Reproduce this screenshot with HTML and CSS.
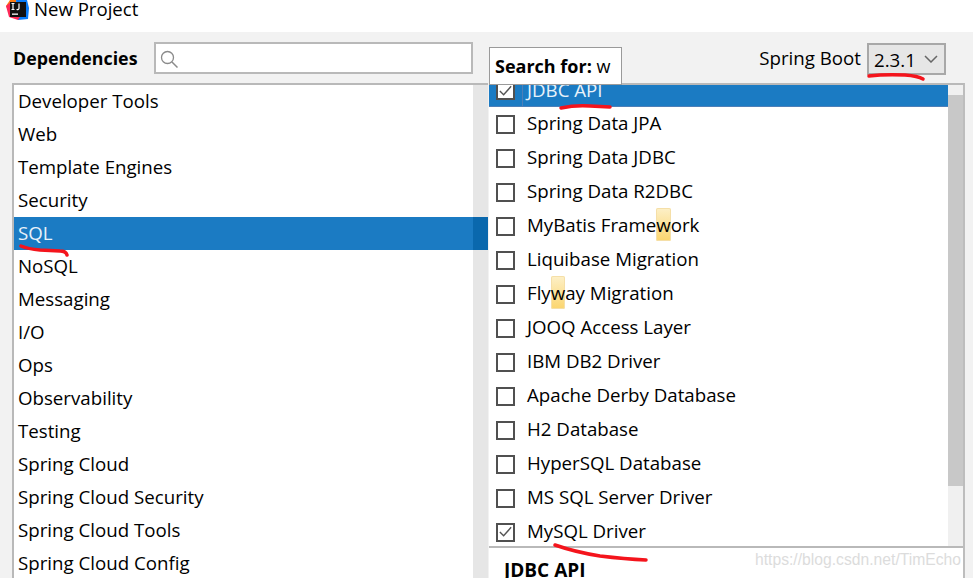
FILE: index.html
```html
<!DOCTYPE html>
<html lang="en">
<head>
<meta charset="utf-8">
<title>New Project</title>
<link rel="stylesheet" href="styles.css">
</head>
<body>
<div class="window">
  <header class="titlebar">
    <svg class="logo" width="23" height="21" viewBox="0 0 23 21">
      <path d="M0 6 L4 0 H10 V8 L4 14 Z" fill="#f97a12"/>
      <path d="M10 0 H21 L23 8 L22 19 L12 20 Z" fill="#087cfa"/>
      <path d="M0 6 L3 17 L12 20 L16 14 L5 2 Z" fill="#fe2857"/>
      <rect x="4" y="2" width="16" height="15" fill="#111"/>
      <rect x="6" y="13.5" width="6" height="1.3" fill="#fff"/>
      <path d="M7 3.5 V9.5 M5.5 3.5 H8.5 M5.5 9.5 H8.5 M13 3.5 V8.5 Q13 9.7 10.5 9.5" fill="none" stroke="#fff" stroke-width="1.2"/>
    </svg>
    <span class="title">New Project</span>
  </header>
  <main class="content">
    <div class="col-left">
      <div class="deps-head">
        <strong class="deps-label">Dependencies</strong>
        <div class="search">
          <svg width="18" height="18" viewBox="0 0 18 18"><circle cx="7.5" cy="7.5" r="6" fill="none" stroke="#8a8a8a" stroke-width="1.3"/><path d="M12 12 L17.5 17.5" stroke="#8a8a8a" stroke-width="1.5"/></svg>
        </div>
      </div>
      <div class="panel panel-left">
        <ul class="cats">
          <li>Developer Tools</li>
          <li>Web</li>
          <li>Template Engines</li>
          <li>Security</li>
          <li class="sel">SQL</li>
          <li>NoSQL</li>
          <li>Messaging</li>
          <li>I/O</li>
          <li>Ops</li>
          <li>Observability</li>
          <li>Testing</li>
          <li>Spring Cloud</li>
          <li>Spring Cloud Security</li>
          <li>Spring Cloud Tools</li>
          <li>Spring Cloud Config</li>
        </ul>
        <div class="track-left"><div class="track-sel"></div></div>
      </div>
    </div>
    <div class="col-right">
      <div class="boot-row">
        <span class="boot-label">Spring Boot</span>
        <div class="combo"><span>2.3.1</span>
          <svg width="14" height="8" viewBox="0 0 14 8"><path d="M1 1 L7 7 L13 1" fill="none" stroke="#666" stroke-width="1.5"/></svg>
        </div>
      </div>
      <div class="panel panel-right">
        <div class="list-wrap">
          <ul class="deps">
            <li class="dep first sel"><span class="box on"><svg width="16" height="14" viewBox="0 0 16 14"><path d="M2 7 L6 11 L14 2" fill="none" stroke="#555" stroke-width="1.5"/></svg></span><span class="dep-name">JDBC API</span></li>
            <li class="dep"><span class="box"></span>Spring Data JPA</li>
            <li class="dep"><span class="box"></span>Spring Data JDBC</li>
            <li class="dep"><span class="box"></span>Spring Data R2DBC</li>
            <li class="dep"><span class="box"></span><span>MyBatis Frame<mark>w</mark>ork</span></li>
            <li class="dep"><span class="box"></span>Liquibase Migration</li>
            <li class="dep"><span class="box"></span><span>Fly<mark>w</mark>ay Migration</span></li>
            <li class="dep"><span class="box"></span>JOOQ Access Layer</li>
            <li class="dep"><span class="box"></span>IBM DB2 Driver</li>
            <li class="dep"><span class="box"></span>Apache Derby Database</li>
            <li class="dep"><span class="box"></span>H2 Database</li>
            <li class="dep"><span class="box"></span>HyperSQL Database</li>
            <li class="dep"><span class="box"></span>MS SQL Server Driver</li>
            <li class="dep"><span class="box"><svg width="16" height="14" viewBox="0 0 16 14"><path d="M2 7 L6 11 L14 2" fill="none" stroke="#555" stroke-width="1.5"/></svg></span>MySQL Driver</li>
          </ul>
          <div class="track-right"><div class="thumb"></div></div>
        </div>
        <div class="desc"><strong>JDBC API</strong></div>
      </div>
    </div>
  </main>
  <div class="popup"><strong>Search for:</strong> w</div>
  <div class="watermark">https://blog.csdn.net/TimEcho</div>
  <svg class="ink" width="973" height="578" viewBox="0 0 973 578">
    <g fill="none" stroke="#f4141c" stroke-width="3.5" stroke-linecap="round" stroke-linejoin="round">
      <path d="M21 246 Q28 249 40 250 L60 251 Q66 251 67 255"/>
      <path d="M561 108 Q575 105 590 106 L610 107"/>
      <path d="M869 76 Q885 74 905 75 Q918 76 923 79"/>
      <path d="M555 545 Q575 552 600 556 Q625 559 646 560"/>
    </g>
  </svg>
</div>
</body>
</html>
```
FILE: styles.css
```css
* { box-sizing: border-box; }
html, body { margin: 0; padding: 0; }
body {
  width: 973px;
  height: 578px;
  overflow: hidden;
  font-family: "Open Sans", "Noto Sans", sans-serif;
  font-size: 18.7px;
  color: #000;
  background: #f2f2f2;
}
ul { list-style: none; margin: 0; padding: 0; }
.window { position: relative; width: 973px; height: 578px; overflow: hidden; }

.titlebar {
  height: 32px;
  background: #fff;
  display: flex;
  align-items: flex-start;
  padding-left: 6px;
  gap: 5px;
}
.logo { display: block; flex: none; }
.title { font-size: 18.6px; line-height: 18px; }

.content { display: flex; padding-left: 12px; height: 546px; }
.col-left { width: 477px; flex: none; display: flex; flex-direction: column; }
.col-right { width: 476px; flex: none; display: flex; flex-direction: column; }

.deps-head { height: 51px; flex: none; display: flex; align-items: flex-start; padding: 10px 0 0 1px; }
.deps-label { font-size: 17.8px; line-height: 32px; font-weight: 700; width: 141px; }
.search {
  width: 319px;
  height: 32px;
  border: 2px solid #b9b9b9;
  background: #fff;
  padding: 6px 0 0 4px;
}
.search svg { display: block; }

.panel-left {
  display: flex;
  flex: 1;
  min-height: 0;
  width: 476px;
  border-top: 2px solid #b9b9b9;
  border-left: 2px solid #b9b9b9;
  background: #fff;
}
.cats { width: 459px; }
.cats li { height: 33px; line-height: 32px; padding-left: 4px; white-space: nowrap; }
.cats li.sel { background: #1b7bc3; color: #e8f2fa; }
.track-left { width: 15px; background: #e6e6e6; padding-top: 132px; }
.track-sel { height: 33px; background: #0a68ad; }

.boot-row {
  height: 51px;
  flex: none;
  display: flex;
  align-items: flex-start;
  justify-content: flex-end;
  padding: 10px 19px 0 0;
  gap: 6px;
}
.boot-label { line-height: 32px; }
.combo {
  width: 79px;
  height: 32px;
  margin-top: 1px;
  border: 2px solid #a8a8a8;
  background: #e6e6e6;
  display: flex;
  align-items: center;
  gap: 8px;
  padding-left: 5px;
}
.panel-right {
  border-top: 2px solid #b9b9b9;
  border-right: 2px solid #bdbdbd;
  flex: 1;
  min-height: 0;
  display: flex;
  flex-direction: column;
}
.list-wrap { display: flex; height: 461px; flex: none; overflow: hidden; }
.deps { width: 459px; background: #fff; }
.dep { height: 34px; line-height: 32px; padding-bottom: 2px; display: flex; align-items: center; white-space: nowrap; }
.dep.first { height: 22px; line-height: 10px; padding-bottom: 0; align-items: flex-end; }
.dep.sel { background: #1b7bc3; color: #e8f2fa; border-bottom: 1px solid #4d7fb8; }
.dep-name { border-left: 1px solid #4d7fb8; padding-left: 4px; height: 22px; line-height: 11px; margin-left: -5px; }
.box {
  width: 19px;
  height: 19px;
  flex: none;
  margin: 2px 12px 0 7px;
  border: 2px solid #505050;
  background: #fff;
  display: flex;
  align-items: center;
  justify-content: center;
}
.first .box { margin-top: 0; margin-bottom: 6px; }
mark {
  background: linear-gradient(#fdf0c8, #fbd56e);
  color: inherit;
  border-radius: 2px;
  box-shadow: inset 0 0 0 1px #f5dfa8;
  padding: 4px 0;
}
.track-right { width: 15px; background: #f0f0f0; padding-top: 10px; }
.thumb { height: 391px; background: #c8c8c8; }
.desc { flex: 1; min-height: 0; overflow: hidden; background: #fff; border-top: 2px solid #b9b9b9; padding: 9px 0 0 15px; }
.desc strong { display: block; font-size: 19px; line-height: 26px; }

.popup {
  position: absolute;
  left: 489px;
  top: 47px;
  width: 133px;
  height: 38px;
  background: #fff;
  border: 1px solid #9a9a9a;
  padding-left: 5px;
  line-height: 36px;
  font-size: 18px;
  white-space: nowrap;
}
.watermark {
  position: absolute;
  left: 755px;
  top: 551px;
  font-family: "Liberation Sans", sans-serif;
  font-size: 15.7px;
  color: #dcdcdc;
  white-space: nowrap;
}
.ink { position: absolute; left: 0; top: 0; pointer-events: none; }
```
